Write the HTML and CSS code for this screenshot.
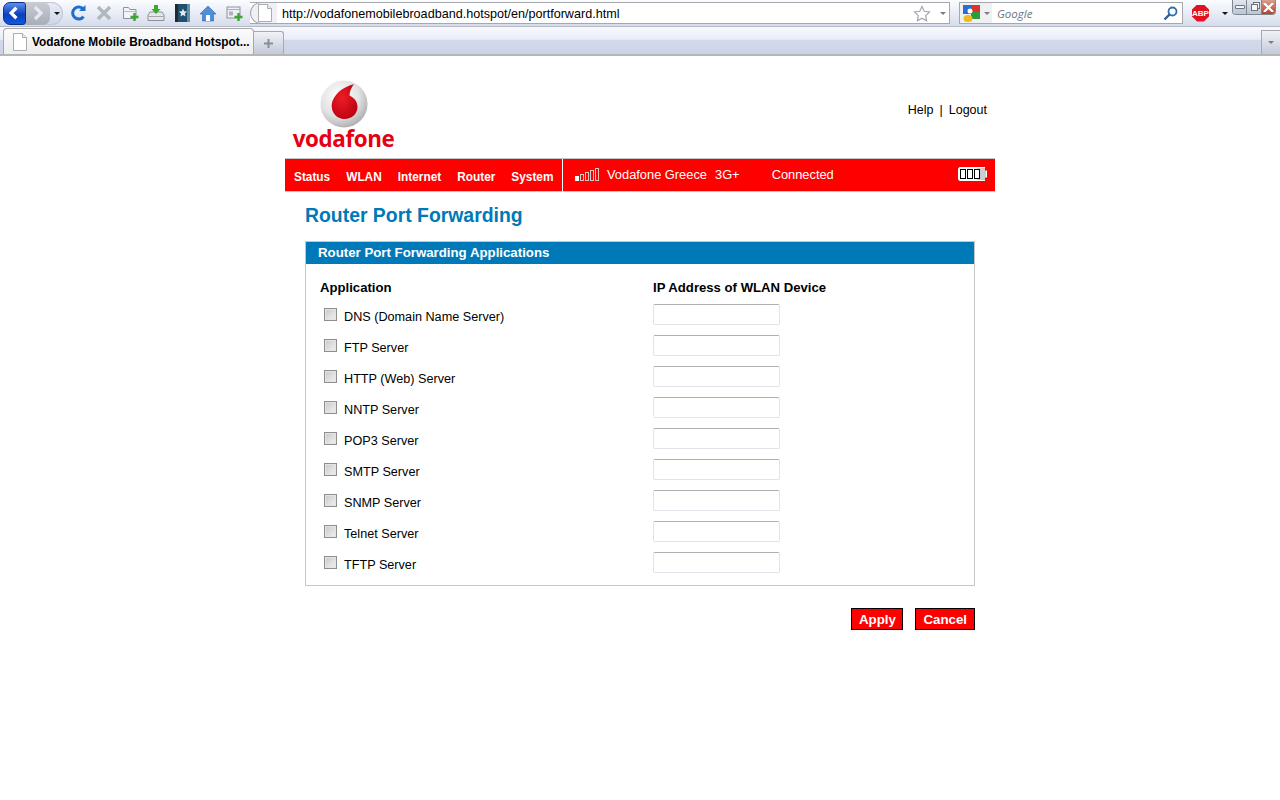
FILE: index.html
```html
<!DOCTYPE html>
<html lang="en">
  <head>
    <meta charset="UTF-8" />
    <title>Vodafone Mobile Broadband Hotspot</title>
    <link rel="stylesheet" href="styles.css">
  </head>
  <body>
    <div class="browser">
      <div class="toolbar">
        <div class="nav-pill">
          <span class="nav-btn back"><svg width="22" height="22" viewBox="0 0 22 22"><path d="M13 5.500l-5.500 5.500 5.500 5.500" fill="none" stroke="#fff" stroke-width="3.400"/></svg></span>
          <span class="nav-btn forward"><svg width="20" height="20" viewBox="0 0 20 20"><path d="M7 4l6 6-6 6" fill="none" stroke="#e6e9f0" stroke-width="3.200"/></svg></span>
          <span class="arrow-down dark"></span>
        </div>
        <svg class="tool reload" width="18" height="18" viewBox="0 0 18 18"><path d="M14.500 5.500A6 6 0 1 0 14.500 12.500" fill="none" stroke="#1f6fd0" stroke-width="3"/><path d="M10 7h6.500V1z" fill="#1f6fd0"/></svg>
        <svg class="tool stop" width="16" height="16" viewBox="0 0 16 16"><path d="M2 2l12 12M14 2L2 14" stroke="#b2b6bd" stroke-width="3.400"/></svg>
        <svg class="tool newfolder" width="18" height="18" viewBox="0 0 18 18"><path d="M1.500 3.500h5l1.500 2h6v9h-12.500z" fill="#f2f4f7" stroke="#8d939b"/><path d="M1.500 7.500h12.500" stroke="#b8bdc5"/><path d="M12.500 9v8M8.500 13h8" stroke="#3aa82a" stroke-width="2.400"/></svg>
        <svg class="tool download" width="18" height="18" viewBox="0 0 18 18"><path d="M3 8L1 11v5.500h16V11l-2-3z" fill="#e4e6e8" stroke="#8d9096"/><path d="M1.500 12.500h15" stroke="#a4a7ac"/><path d="M7 1h4v4h2.500L9 10 4.500 5H7z" fill="#3aa82a"/></svg>
        <svg class="tool bookmark" width="15" height="18" viewBox="0 0 15 18"><rect width="15" height="18" fill="#20506f"/><rect width="3" height="18" fill="#25292e"/><rect x="12" width="3" height="18" fill="#5d8fae"/><path d="M8 4.500l1.200 2.800 3 .2-2.300 2 .7 3L8 11l-2.600 1.500.7-3-2.300-2 3-.2z" fill="#dfeaf2"/></svg>
        <svg class="tool home" width="18" height="17" viewBox="0 0 18 17"><path d="M9 1L1 9h2.500v7h11V9H17z" fill="#4f8fd8" stroke="#2a5fa8" stroke-width=".6"/><rect x="7" y="10" width="4" height="6" fill="#fff"/></svg>
        <svg class="tool addtab" width="18" height="18" viewBox="0 0 18 18"><rect x="1" y="3" width="13" height="11" fill="#eef0f3" stroke="#8d939b"/><path d="M1 5.500h13" stroke="#a9aeb5"/><rect x="3" y="7.500" width="4" height="4" fill="#aeb3ba"/><path d="M12.500 9v8M8.500 13h8" stroke="#3aa82a" stroke-width="2.400"/></svg>
        <div class="urlbar">
          <span class="site-icon"><svg width="14" height="18" viewBox="0 0 14 18"><path d="M.5.500h9l4 4v13H.5z" fill="#fff" stroke="#a9acb1"/><path d="M9.500.500v4h4" fill="#ececec" stroke="#a9acb1"/></svg></span>
          <span class="url">http://vodafonemobilebroadband.hotspot/en/portforward.html</span>
          <svg class="star" width="18" height="17" viewBox="0 0 18 17"><path d="M9 1.500l2.300 4.800 5.200.7-3.800 3.600.9 5.200L9 13.300l-4.600 2.500.9-5.200L1.500 7l5.200-.7z" fill="#fff" stroke="#a4a7ab" stroke-width="1.200"/></svg>
          <span class="arrow-down"></span>
        </div>
        <div class="searchbar">
          <span class="engine">
            <svg width="17" height="17" viewBox="0 0 17 17"><rect width="9" height="9" fill="#2a6fd0"/><rect x="9" width="8" height="7" fill="#d9352a"/><rect x="8" y="7" width="9" height="7" fill="#2f9a3a"/><ellipse cx="5" cy="13.500" rx="4.500" ry="3.500" fill="#f2b81f"/><circle cx="7" cy="6" r="2.500" fill="#fff"/></svg>
            <span class="arrow-down"></span>
          </span>
          <span class="search-text">Google</span>
          <svg class="magnifier" width="15" height="15" viewBox="0 0 15 15"><circle cx="9.500" cy="5.500" r="4" fill="none" stroke="#2f6fa8" stroke-width="1.800"/><path d="M6.500 8.500L1.500 13.500" stroke="#2f5f90" stroke-width="2.400"/></svg>
        </div>
        <span class="abp">ABP</span>
        <span class="arrow-down dark abp-arrow"></span>
      </div>
      <div class="window-btns">
        <span class="win-btn"><i class="win-min"></i></span>
        <span class="win-btn"><i class="win-max"></i></span>
        <span class="win-btn win-close"><svg width="11" height="9" viewBox="0 0 11 9"><path d="M1 0l9 9M10 0L1 9" stroke="#fff" stroke-width="2.200"/></svg></span>
      </div>
      <div class="tabbar">
        <div class="tab">
          <svg width="14" height="18" viewBox="0 0 14 18"><path d="M.5.500h9l4 4v13H.5z" fill="#fff" stroke="#a9acb1"/><path d="M9.500.500v4h4" fill="#ececec" stroke="#a9acb1"/></svg>
          <span>Vodafone Mobile Broadband Hotspot...</span>
        </div>
        <div class="newtab"><svg width="9" height="9" viewBox="0 0 9 9"><path d="M4.500 0v9M0 4.500h9" stroke="#8a8d94" stroke-width="2"/></svg></div>
        <div class="tabbar-fill"></div>
        <div class="tablist"><span class="arrow-down"></span></div>
      </div>
    </div>

    <div class="page">
      <div class="header">
        <div class="logo">
          <svg width="50" height="48" viewBox="0 0 50 48">
            <defs>
              <radialGradient id="ball" cx="0.4" cy="0.35" r="0.7"><stop offset="0" stop-color="#ffffff"/><stop offset="0.6" stop-color="#e2e2e2"/><stop offset="1" stop-color="#a9a9a9"/></radialGradient>
              <radialGradient id="drop" cx="0.4" cy="0.4" r="0.7"><stop offset="0" stop-color="#ee1c25"/><stop offset="1" stop-color="#b80010"/></radialGradient>
            </defs>
            <circle cx="25" cy="24" r="23.500" fill="url(#ball)"/>
            <path d="M34 4.500C27 6 17 11.500 13.500 21c-3 9 3 18 12 18 7.500 0 13-5.500 13-12 0-6.500-4.500-9.500-8-11.500 0-4 2-8 4.500-11.500z" fill="url(#drop)"/>
          </svg>
          <span class="logo-text">vodafone</span>
        </div>
        <div class="header-links"><a>Help</a><span>|</span><a>Logout</a></div>
      </div>

      <div class="statusbar">
        <ul class="menu">
          <li>Status</li>
          <li>WLAN</li>
          <li>Internet</li>
          <li>Router</li>
          <li>System</li>
        </ul>
        <div class="status">
          <span class="signal"><i></i><i></i><i></i><i></i><i></i></span>
          <span class="network">Vodafone Greece</span>
          <span class="net-type">3G+</span>
          <span class="connected">Connected</span>
          <span class="battery"><i></i><i></i><i></i></span>
        </div>
      </div>

      <div class="content">
        <h1>Router Port Forwarding</h1>
        <div class="panel">
          <h2>Router Port Forwarding Applications</h2>
          <div class="panel-body">
            <div class="col-head">
              <span>Application</span>
              <span>IP Address of WLAN Device</span>
            </div>
            <div class="row"><label><input type="checkbox">DNS (Domain Name Server)</label><input type="text"></div>
            <div class="row"><label><input type="checkbox">FTP Server</label><input type="text"></div>
            <div class="row"><label><input type="checkbox">HTTP (Web) Server</label><input type="text"></div>
            <div class="row"><label><input type="checkbox">NNTP Server</label><input type="text"></div>
            <div class="row"><label><input type="checkbox">POP3 Server</label><input type="text"></div>
            <div class="row"><label><input type="checkbox">SMTP Server</label><input type="text"></div>
            <div class="row"><label><input type="checkbox">SNMP Server</label><input type="text"></div>
            <div class="row"><label><input type="checkbox">Telnet Server</label><input type="text"></div>
            <div class="row"><label><input type="checkbox">TFTP Server</label><input type="text"></div>
          </div>
        </div>
        <div class="actions">
          <button>Apply</button>
          <button class="cancel">Cancel</button>
        </div>
      </div>
    </div>
  </body>
</html>
```

FILE: styles.css
```css
html, body {
  height: 100%;
}

body {
  margin: 0;
  background-color: #fff;
  color: #000;
  font-family: "Liberation Sans", Arial, sans-serif;
  overflow: hidden;
}

/* browser chrome */
.browser {
  position: relative;
  height: 56px;
  box-sizing: border-box;
  border-bottom: 2px solid #b4b6ba;
}

.toolbar {
  display: flex;
  align-items: center;
  height: 27px;
  padding-left: 3px;
  box-sizing: border-box;
  border-bottom: 1px solid #b6bac4;
  background: linear-gradient(#fbfcfe, #f0f3fa 30%, #d5dcec);
}

.nav-pill {
  display: flex;
  align-items: center;
  width: 60px;
  height: 23px;
  border-radius: 12px;
  background: linear-gradient(#e8ecf6, #cfd6e8);
  box-shadow: inset 0 0 0 1px #c3c8d4;
}

.nav-btn {
  display: flex;
  align-items: center;
  justify-content: center;
  height: 23px;
  box-sizing: border-box;
}

.nav-btn.back {
  width: 23px;
  border: 1px solid #0b2f8c;
  border-radius: 7px 3px 3px 7px;
  background: linear-gradient(#5f8fe8, #0a3fbe 55%, #0f58dc);
}

.nav-btn.forward {
  width: 24px;
  border-radius: 0 7px 7px 0;
  background: linear-gradient(#c9ccd3, #a9adb7);
}

.arrow-down {
  width: 0;
  height: 0;
  border-left: 3px solid transparent;
  border-right: 3px solid transparent;
  border-top: 3px solid #7b7d82;
}

.arrow-down.dark {
  border-top-color: #111;
}

.nav-pill .arrow-down {
  margin-left: 4px;
}

.tool {
  flex: none;
}

.reload { margin-left: 6px; }
.stop { margin-left: 9px; }
.newfolder { margin-left: 10px; }
.download { margin-left: 7px; }
.bookmark { margin-left: 10px; }
.home { margin-left: 9px; }
.addtab { margin-left: 9px; }

.urlbar {
  display: flex;
  align-items: center;
  width: 700px;
  height: 22px;
  margin-left: 6px;
  box-sizing: border-box;
  border: 1px solid #a5a8ad;
  border-left: 0;
  background: #fff;
}

.site-icon {
  display: flex;
  align-items: center;
  width: 27px;
  height: 22px;
  margin-top: -1px;
  margin-bottom: -1px;
  padding-left: 7px;
  box-sizing: border-box;
  border: 1px solid #a5a8ad;
  border-right: 0;
  border-radius: 11px 0 0 11px;
  background: #eef0f5;
}

.url {
  flex: 1;
  margin-left: 5px;
  padding-top: 1px;
  font-size: 12.600px;
  white-space: nowrap;
}

.star {
  margin-right: 9px;
}

.urlbar .arrow-down {
  margin-right: 3px;
}

.searchbar {
  display: flex;
  align-items: center;
  width: 224px;
  height: 22px;
  margin-left: 9px;
  box-sizing: border-box;
  border: 1px solid #a5a8ad;
  background: #fff;
}

.engine {
  display: flex;
  align-items: center;
  gap: 4px;
  width: 32px;
  height: 20px;
  padding-left: 3px;
  box-sizing: border-box;
  background: #eef0f2;
}

.search-text {
  flex: 1;
  margin-left: 5px;
  color: #6e7680;
  font-family: "Open Sans", sans-serif;
  font-size: 11.500px;
  font-style: italic;
}

.magnifier {
  margin-right: 4px;
}

.abp {
  display: flex;
  align-items: center;
  justify-content: center;
  width: 17px;
  height: 17px;
  margin-left: 9px;
  background: #e3101f;
  clip-path: polygon(30% 0, 70% 0, 100% 30%, 100% 70%, 70% 100%, 30% 100%, 0 70%, 0 30%);
  color: #fff;
  font-size: 8px;
  font-weight: bold;
}

.abp-arrow {
  margin-left: 13px;
}

.window-btns {
  position: absolute;
  top: 0;
  right: 4px;
  display: flex;
  height: 14px;
  border: 1px solid #7f8793;
  border-top: 0;
  border-radius: 0 0 4px 4px;
  overflow: hidden;
}

.win-btn {
  display: flex;
  align-items: center;
  justify-content: center;
  width: 14px;
  border-right: 1px solid #7f8793;
  background: linear-gradient(#e3e7ee, #bcc4d2);
}

.win-btn:first-child {
  width: 13px;
}

.win-btn.win-close {
  width: 13px;
  border-right: 0;
  background: linear-gradient(#d9a090, #b6402c);
}

.win-min {
  display: block;
  width: 8px;
  height: 2px;
  border: 1px solid #6d7480;
  border-radius: 1px;
  background: #f4f5f7;
}

.win-max {
  display: block;
  width: 5px;
  height: 5px;
  border: 1px solid #6d7480;
  box-shadow: 2px -2px 0 -1px #f4f5f7, 2px -2px 0 0 #6d7480;
  background: #f4f5f7;
}

.tabbar {
  display: flex;
  align-items: flex-end;
  height: 27px;
  padding-left: 3px;
  background: linear-gradient(#f8f9fd, #e9edf7 45%, #d2d9ea 50%, #ccd3e5);
}

.tab {
  display: flex;
  align-items: center;
  gap: 5px;
  width: 251px;
  height: 26px;
  padding-left: 9px;
  box-sizing: border-box;
  border: 1px solid #a7a9ad;
  border-bottom: 0;
  border-radius: 4px 4px 0 0;
  background: linear-gradient(#fbfbfc, #eeeeef);
  font-size: 11.850px;
  font-weight: bold;
  white-space: nowrap;
}

.newtab {
  display: flex;
  align-items: center;
  justify-content: center;
  width: 30px;
  height: 23px;
  box-sizing: border-box;
  border: 1px solid #a7a9ad;
  border-left: 0;
  border-bottom: 0;
  border-radius: 0 3px 0 0;
  background: linear-gradient(#f0f2f7, #c4cad9);
}

.tabbar-fill {
  flex: 1;
}

.tablist {
  display: flex;
  align-items: center;
  justify-content: center;
  width: 18px;
  height: 23px;
  border-left: 1px solid #a7a9ad;
  border-top: 1px solid #a7a9ad;
  background: linear-gradient(#f0f2f7, #c4cad9);
}

/* page */
.page {
  width: 710px;
  margin: 0 auto;
}

.header {
  display: flex;
  justify-content: space-between;
  height: 102px;
  box-sizing: border-box;
}

.logo {
  display: flex;
  flex-direction: column;
  align-items: center;
  width: 101px;
  margin: 24px 0 0 8px;
}

.logo svg {
  flex: none;
}

.logo-text {
  margin-top: -1px;
  color: #e60012;
  font-family: "Open Sans", sans-serif;
  font-size: 22.400px;
  font-weight: 700;
  line-height: 24px;
  letter-spacing: -0.4px;
}

.header-links {
  display: flex;
  gap: 6px;
  margin: 47px 8px 0 0;
  font-size: 12.500px;
  line-height: 14px;
}

.statusbar {
  display: flex;
  height: 34px;
  box-sizing: border-box;
  border-top: 1px solid #c6c6c6;
  border-bottom: 1px solid #c6c6c6;
  background: #f00;
  color: #fff;
  font-size: 12.850px;
}

.menu {
  display: flex;
  gap: 16px;
  width: 278px;
  margin: 0;
  padding: 11px 0 0 9px;
  box-sizing: border-box;
  border-right: 1px solid #fff;
  font-size: 11.850px;
  font-weight: bold;
  list-style: none;
}

.status {
  display: flex;
  flex: 1;
  align-items: center;
  padding: 0 8px 2px 12px;
}

.signal {
  display: flex;
  align-items: flex-end;
  gap: 1px;
  height: 14px;
}

.signal i {
  display: block;
  width: 4px;
  box-sizing: border-box;
  border: 1px solid #d6c6c6;
}

.signal i:nth-child(1) { height: 5px; background: #fff; border-color: #fff; }
.signal i:nth-child(2) { height: 7px; }
.signal i:nth-child(3) { height: 9px; }
.signal i:nth-child(4) { height: 11px; }
.signal i:nth-child(5) { height: 13px; }

.network {
  margin-left: 8px;
}

.net-type {
  margin-left: 8px;
}

.connected {
  margin-left: 32px;
}

.battery {
  display: flex;
  gap: 1px;
  width: 29px;
  height: 14px;
  margin-left: auto;
  padding: 1px;
  box-sizing: border-box;
  border: 1px solid #fff;
  border-radius: 2px;
  background: linear-gradient(to right, #fff 65%, #ccc 65%);
  clip-path: polygon(0 0, 93% 0, 93% 25%, 100% 25%, 100% 75%, 93% 75%, 93% 100%, 0 100%);
}

.battery i {
  display: block;
  width: 6px;
  box-sizing: border-box;
  border: 1px solid #000;
  background: #fff;
}

.content {
  padding: 0 20px;
}

h1 {
  margin: 12px 0 14px;
  color: #0079b8;
  font-size: 19.400px;
  font-weight: bold;
  line-height: 23px;
}

.panel {
  border: 1px solid #c6c6c6;
}

h2 {
  margin: 0;
  padding-left: 12px;
  background: #0079b8;
  color: #fff;
  font-size: 13.250px;
  font-weight: bold;
  line-height: 22px;
}

.panel-body {
  padding: 14px 14px 7px;
}

.col-head {
  display: grid;
  grid-template-columns: 333px 1fr;
  margin-bottom: 1px;
  font-size: 13.150px;
  font-weight: bold;
  line-height: 20px;
}

.row {
  display: grid;
  grid-template-columns: 333px 1fr;
  align-items: center;
  height: 31px;
  font-size: 12.650px;
}

.row label {
  display: flex;
  align-items: center;
  padding-top: 5px;
}

.row input[type="checkbox"] {
  width: 13px;
  height: 13px;
  margin: 0 7px 5px 4px;
  appearance: none;
  border: 1px solid #8e8e8e;
  background: linear-gradient(135deg, #c8c8c8, #f2f2f2);
  box-shadow: inset 0 0 0 1px #e4e4e4;
}

.row input[type="text"] {
  width: 127px;
  height: 21px;
  padding: 0;
  box-sizing: border-box;
  border: 1px solid #dfe3ea;
  border-top-color: #b0b0b0;
  border-radius: 2px;
}

.actions {
  display: flex;
  justify-content: flex-end;
  gap: 12px;
  margin-top: 22px;
}

button {
  height: 22px;
  padding: 0 6.500px;
  border: 1px solid #000;
  background: #f00;
  color: #fff;
  font-family: "Liberation Sans", Arial, sans-serif;
  font-size: 13.300px;
  font-weight: bold;
}

button.cancel {
  padding: 0 7px;
}
```
